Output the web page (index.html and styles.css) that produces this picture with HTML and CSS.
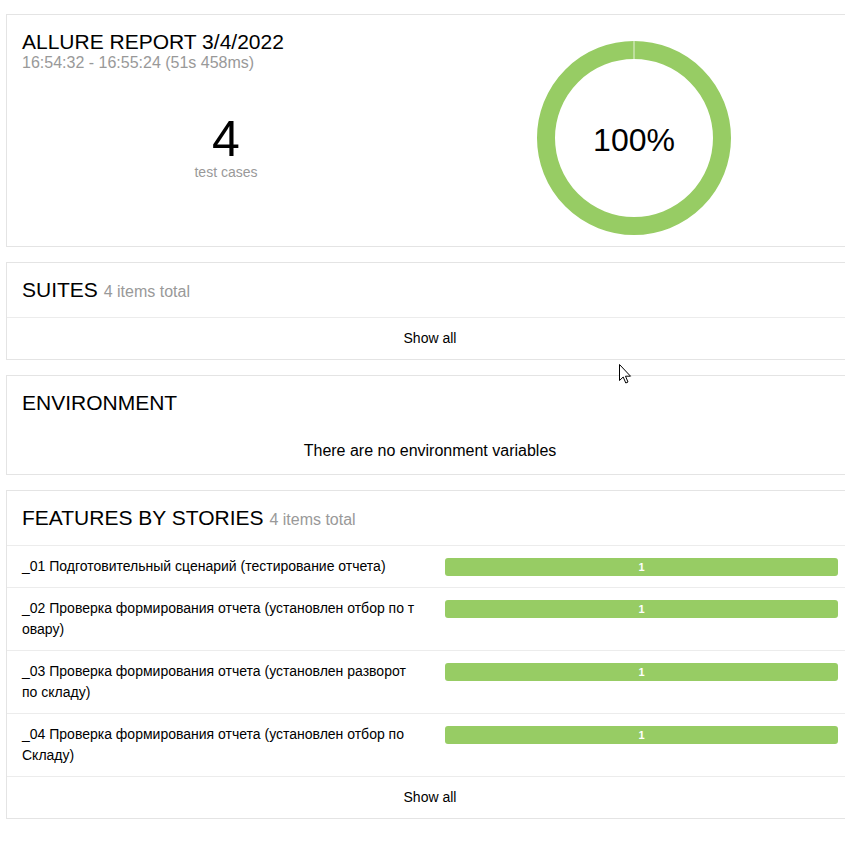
FILE: index.html
```html
<!DOCTYPE html>
<html lang="ru">
<head>
<meta charset="utf-8">
<title>Allure Report</title>
<link rel="stylesheet" href="styles.css">
</head>
<body>
<main class="page">
  <section class="card summary">
    <div class="summary-left">
      <h2 class="report-title">ALLURE REPORT 3/4/2022</h2>
      <div class="report-time">16:54:32 - 16:55:24 (51s 458ms)</div>
      <div class="summary-count">
        <div class="count-num">4</div>
        <div class="count-label">test cases</div>
      </div>
    </div>
    <div class="summary-right">
      <svg class="donut" width="194" height="194" viewBox="0 0 194 194">
        <circle cx="97" cy="97" r="88" fill="none" stroke="#97cc64" stroke-width="18"/>
        <line x1="97" y1="0" x2="97" y2="18" stroke="#ffffff" stroke-width="1" opacity="0.75"/>
        <text x="97" y="110" text-anchor="middle" class="donut-text">100%</text>
      </svg>
    </div>
  </section>

  <section class="card">
    <div class="card-head">
      <h2 class="card-title">SUITES <span class="card-sub">4 items total</span></h2>
    </div>
    <div class="show-all">Show all</div>
  </section>

  <section class="card">
    <div class="card-head">
      <h2 class="card-title">ENVIRONMENT</h2>
    </div>
    <div class="empty">There are no environment variables</div>
  </section>

  <section class="card">
    <div class="card-head">
      <h2 class="card-title">FEATURES BY STORIES <span class="card-sub">4 items total</span></h2>
    </div>
    <div class="row">
      <div class="row-name">_01 Подготовительный сценарий (тестирование отчета)</div>
      <div class="row-bar"><div class="bar">1</div></div>
    </div>
    <div class="row">
      <div class="row-name">_02 Проверка формирования отчета (установлен отбор по товару)</div>
      <div class="row-bar"><div class="bar">1</div></div>
    </div>
    <div class="row">
      <div class="row-name">_03 Проверка формирования отчета (установлен разворот по складу)</div>
      <div class="row-bar"><div class="bar">1</div></div>
    </div>
    <div class="row">
      <div class="row-name">_04 Проверка формирования отчета (установлен отбор по Складу)</div>
      <div class="row-bar"><div class="bar">1</div></div>
    </div>
    <div class="show-all">Show all</div>
  </section>
</main>
<svg class="cursor" width="13" height="20" viewBox="0 0 13 20">
  <path d="M0.5 0.5 L0.5 16.5 L4.2 13 L6.8 19 L9 18 L6.5 12.2 L11.5 12.2 Z" fill="#ffffff" stroke="#000000" stroke-width="1" stroke-linejoin="miter"/>
</svg>
</body>
</html>
```
FILE: styles.css
```css
html, body {
  margin: 0;
  padding: 0;
  background: #ffffff;
}
body {
  position: relative;
  overflow: hidden;
  font-family: "Liberation Sans", Arial, sans-serif;
  color: #000000;
  min-height: 847px;
}
.page {
  padding: 14px 0 0 6px;
}
.card {
  box-sizing: border-box;
  width: 848px;
  border: 1px solid #e4e4e4;
  background: #ffffff;
  margin-bottom: 15px;
}
.summary {
  display: grid;
  grid-template-columns: 1fr 1fr;
  padding: 0 15px;
}
.summary-left {
  padding-top: 15px;
}
.report-title {
  margin: 0;
  font-size: 21px;
  line-height: 24px;
  font-weight: normal;
}
.report-time {
  font-size: 16px;
  line-height: 18px;
  color: #999999;
}
.summary-count {
  margin-top: 42px;
  text-align: center;
}
.count-num {
  font-size: 50px;
  line-height: 50px;
}
.count-label {
  font-size: 14px;
  line-height: 16px;
  color: #999999;
}
.summary-right {
  display: flex;
  justify-content: center;
}
.donut {
  display: block;
  margin-top: 26px;
  margin-bottom: 11px;
}
.donut-text {
  font-family: "Liberation Sans", Arial, sans-serif;
  font-size: 32px;
  fill: #000000;
}
.card-head {
  padding: 15px;
}
.card-title {
  margin: 0;
  font-size: 21px;
  line-height: 24px;
  height: 24px;
  font-weight: normal;
}
.card-sub {
  font-size: 16px;
  line-height: 1;
  color: #999999;
}
.show-all {
  border-top: 1px solid #ececec;
  padding: 12px 15px 13px;
  font-size: 14px;
  line-height: 16px;
  text-align: center;
}
.empty {
  padding: 11px 15px 13px;
  font-size: 16px;
  line-height: 20px;
  text-align: center;
}
.row {
  display: grid;
  grid-template-columns: 1fr 1fr;
  border-top: 1px solid #ececec;
  padding: 10px 15px;
  font-size: 14px;
  line-height: 21px;
}
.row-name {
  padding-right: 15px;
  word-break: break-all;
}
.row-bar {
  padding-left: 15px;
}
.bar {
  margin-top: 2px;
  height: 18px;
  border-radius: 3px;
  background: #97cc64;
  color: #ffffff;
  font-size: 11px;
  font-weight: bold;
  line-height: 18px;
  text-align: center;
}
.cursor {
  position: absolute;
  left: 619px;
  top: 364px;
}
```
